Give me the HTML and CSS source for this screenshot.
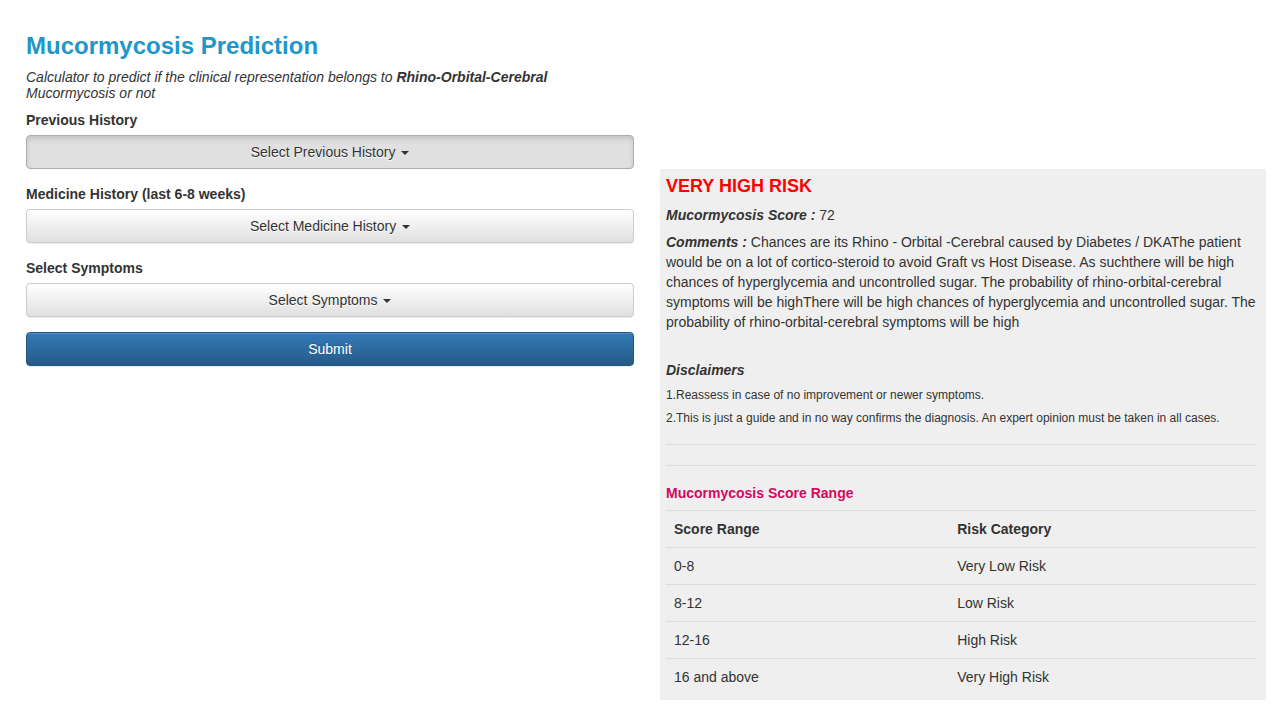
FILE: index.html
```html
<!DOCTYPE html>
<html>
<head>
<meta charset="utf-8">
<link rel="stylesheet" href="styles.css">
</head>
<body>
<div class="page">
  <div class="left">
    <h1 class="title">Mucormycosis Prediction</h1>
    <p class="subtitle">Calculator to predict if the clinical representation belongs to <b>Rhino-Orbital-Cerebral</b> Mucormycosis or not</p>
    <div class="group">
      <label class="lbl">Previous History</label>
      <button class="btn btn-active">Select Previous History <span class="caret"></span></button>
    </div>
    <div class="group">
      <label class="lbl">Medicine History (last 6-8 weeks)</label>
      <button class="btn">Select Medicine History <span class="caret"></span></button>
    </div>
    <div class="group">
      <label class="lbl">Select Symptoms</label>
      <button class="btn">Select Symptoms <span class="caret"></span></button>
    </div>
    <button class="btn btn-primary">Submit</button>
  </div>
  <div class="right">
    <div class="panel">
      <h2 class="risk">VERY HIGH RISK</h2>
      <p class="score"><b><i>Mucormycosis Score :</i></b> 72</p>
      <p class="comments"><b><i>Comments :</i></b> Chances are its Rhino - Orbital -Cerebral caused by Diabetes / DKAThe patient would be on a lot of cortico-steroid to avoid Graft vs Host Disease. As suchthere will be high chances of hyperglycemia and uncontrolled sugar. The probability of rhino-orbital-cerebral symptoms will be highThere will be high chances of hyperglycemia and uncontrolled sugar. The probability of rhino-orbital-cerebral symptoms will be high</p>
      <h4 class="disc-title">Disclaimers</h4>
      <p class="disc">1.Reassess in case of no improvement or newer symptoms.</p>
      <p class="disc">2.This is just a guide and in no way confirms the diagnosis. An expert opinion must be taken in all cases.</p>
      <hr class="rule">
      <hr class="rule rule2">
      <h4 class="range-title">Mucormycosis Score Range</h4>
      <table class="tbl">
        <thead>
          <tr><th class="c1">Score Range</th><th>Risk Category</th></tr>
        </thead>
        <tbody>
          <tr><td>0-8</td><td>Very Low Risk</td></tr>
          <tr><td>8-12</td><td>Low Risk</td></tr>
          <tr><td>12-16</td><td>High Risk</td></tr>
          <tr><td>16 and above</td><td>Very High Risk</td></tr>
        </tbody>
      </table>
    </div>
  </div>
</div>
</body>
</html>
```

FILE: styles.css
```css
* { box-sizing: border-box; }
html, body { margin: 0; padding: 0; background: #fff; }
body {
  font-family: "Liberation Sans", Arial, Helvetica, sans-serif;
  font-size: 14px;
  line-height: 20px;
  color: #333;
}
.page {
  display: flex;
  padding: 0 14px 0 26px;
  gap: 26px;
}
.left {
  width: 608px;
  flex: none;
  padding-top: 31px;
}
.right {
  flex: 1;
  padding-top: 169px;
}
.title {
  margin: 0;
  font-size: 24px;
  line-height: 30px;
  font-weight: bold;
  color: #2196c9;
}
.subtitle {
  margin: 8px 0 9px;
  font-style: italic;
  line-height: 16px;
  max-width: 540px;
}
.group { margin-bottom: 15px; }
.lbl {
  display: block;
  font-weight: bold;
  margin-bottom: 5px;
}
.btn {
  display: block;
  width: 100%;
  height: 34px;
  font-family: inherit;
  font-size: 14px;
  color: #333;
  border: 1px solid #ccc;
  border-radius: 4px;
  background-image: linear-gradient(to bottom, #fff 0%, #e0e0e0 100%);
  box-shadow: inset 0 1px 0 rgba(255,255,255,.15), 0 1px 1px rgba(0,0,0,.075);
  text-shadow: 0 1px 0 #fff;
  padding: 6px 12px;
  cursor: pointer;
}
.btn-active {
  background-image: none;
  background-color: #e0e0e0;
  border-color: #adadad;
  box-shadow: inset 0 3px 5px rgba(0,0,0,.125);
}
.caret {
  display: inline-block;
  width: 0;
  height: 0;
  margin-left: 2px;
  vertical-align: middle;
  border-top: 4px solid #333;
  border-left: 4px solid transparent;
  border-right: 4px solid transparent;
}
.btn-primary {
  color: #fff;
  text-shadow: 0 -1px 0 rgba(0,0,0,.2);
  border-color: #245580;
  background-image: linear-gradient(to bottom, #337ab7 0%, #265a88 100%);
}
.panel {
  background: #efefef;
  padding: 7px 10px 1px 6px;
}
.risk {
  margin: 0 0 9px;
  color: #f00;
  font-size: 18px;
  line-height: 20px;
  font-weight: bold;
}
.score { margin: 0 0 7px; }
.comments { margin: 0 0 28px; }
.disc-title {
  margin: 0 0 5px;
  font-size: 14px;
  font-style: italic;
  font-weight: bold;
}
.disc {
  margin: 0 0 3px;
  font-size: 12px;
  line-height: 20px;
}
.rule {
  border: 0;
  border-top: 1px solid #ddd;
  margin: 16px 0 0;
}
.rule2 { margin-top: 20px; }
.range-title {
  margin: 17px 0 7px;
  color: #d10a5f;
  font-size: 14px;
  font-weight: bold;
  line-height: 20px;
}
.tbl {
  width: 100%;
  border-collapse: collapse;
  margin-bottom: 4px;
}
.tbl th, .tbl td {
  text-align: left;
  padding: 8px;
  line-height: 20px;
  border-top: 1px solid #ddd;
}
.tbl th { border-bottom: 1px solid #ddd; }
.tbl .c1 { width: 48%; }
```
